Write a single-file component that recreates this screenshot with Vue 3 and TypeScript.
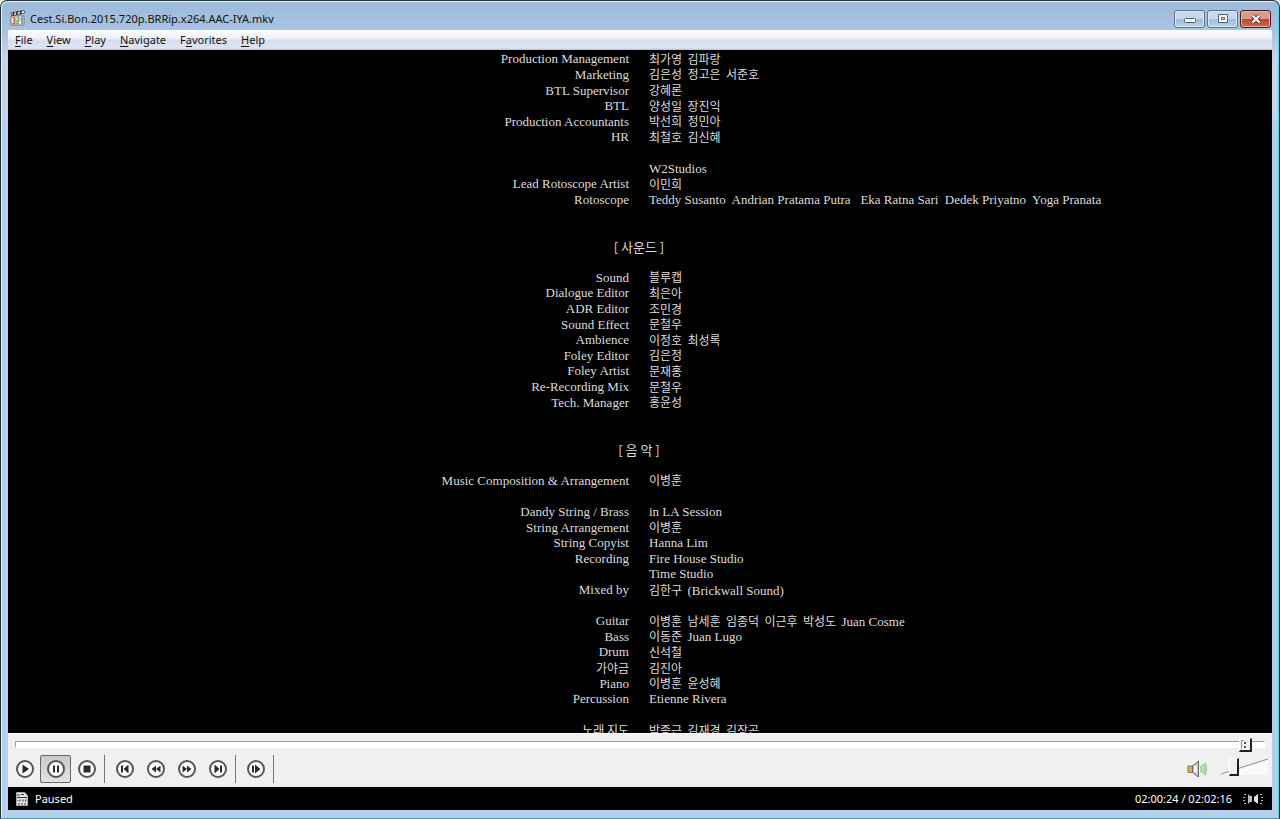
<script setup lang="ts">
interface Credit { row: number; role?: string; names: string }
interface Part { text: string; hangul: boolean }

const menus = [
  { pre: '', key: 'F', post: 'ile' },
  { pre: '', key: 'V', post: 'iew' },
  { pre: '', key: 'P', post: 'lay' },
  { pre: '', key: 'N', post: 'avigate' },
  { pre: 'F', key: 'a', post: 'vorites' },
  { pre: '', key: 'H', post: 'elp' },
]

const credits: Credit[] = [
  { row: 1, role: 'Production Management', names: '최가영  김파랑' },
  { row: 2, role: 'Marketing', names: '김은성  정고은  서준호' },
  { row: 3, role: 'BTL Supervisor', names: '강혜론' },
  { row: 4, role: 'BTL', names: '양성일  장진익' },
  { row: 5, role: 'Production Accountants', names: '박선희  정민아' },
  { row: 6, role: 'HR', names: '최철호  김신혜' },
  { row: 8, names: 'W2Studios' },
  { row: 9, role: 'Lead Rotoscope Artist', names: '이민희' },
  { row: 10, role: 'Rotoscope', names: 'Teddy Susanto  Andrian Pratama Putra   Eka Ratna Sari  Dedek Priyatno  Yoga Pranata' },
  { row: 15, role: 'Sound', names: '블루캡' },
  { row: 16, role: 'Dialogue Editor', names: '최은아' },
  { row: 17, role: 'ADR Editor', names: '조민경' },
  { row: 18, role: 'Sound Effect', names: '문철우' },
  { row: 19, role: 'Ambience', names: '이정호  최성록' },
  { row: 20, role: 'Foley Editor', names: '김은정' },
  { row: 21, role: 'Foley Artist', names: '문재홍' },
  { row: 22, role: 'Re-Recording Mix', names: '문철우' },
  { row: 23, role: 'Tech. Manager', names: '홍윤성' },
  { row: 28, role: 'Music Composition & Arrangement', names: '이병훈' },
  { row: 30, role: 'Dandy String / Brass', names: 'in LA Session' },
  { row: 31, role: 'String Arrangement', names: '이병훈' },
  { row: 32, role: 'String Copyist', names: 'Hanna Lim' },
  { row: 33, role: 'Recording', names: 'Fire House Studio' },
  { row: 34, names: 'Time Studio' },
  { row: 35, role: 'Mixed by', names: '김한구  (Brickwall Sound)' },
  { row: 37, role: 'Guitar', names: '이병훈  남세훈  임종덕  이근후  박성도  Juan Cosme' },
  { row: 38, role: 'Bass', names: '이동준  Juan Lugo' },
  { row: 39, role: 'Drum', names: '신석철' },
  { row: 40, role: '가야금', names: '김진아' },
  { row: 41, role: 'Piano', names: '이병훈  윤성혜' },
  { row: 42, role: 'Percussion', names: 'Etienne Rivera' },
  { row: 44, role: '노래 지도', names: '박종근  김재경  김장곤' },
]

const headings = [
  { row: 13, text: '[ 사운드 ]' },
  { row: 26, text: '[ 음 악 ]' },
]

const controls = [
  [
    { label: 'Play', d: 'M6.500 4.500l6.500 4.500-6.500 4.500z' },
    { label: 'Pause', d: 'M6 5.500h2v7H6zM10 5.500h2v7h-2z', active: true },
    { label: 'Stop', d: 'M5.500 5.500h7v7h-7z' },
  ],
  [
    { label: 'Previous', d: 'M5 5.500h2v7H5zM12.500 4.500v9L7.500 9z' },
    { label: 'Rewind', d: 'M9 5.500v7L4.500 9zM13.500 5.500v7L9 9z' },
    { label: 'Forward', d: 'M4.500 5.500v7L9 9zM9 5.500v7l4.500-3.500z' },
    { label: 'Next', d: 'M5.500 4.500v9l5-4.500zM11 5.500h2v7h-2z' },
  ],
  [{ label: 'Frame step', d: 'M5 5.500h2v7H5zM8 4.500v9l5.500-4.500z' }],
]

function split(text: string): Part[] {
  return (text.match(/[가-힣][가-힣 ]*|[^가-힣]+/g) ?? []).map((t) => ({ text: t, hangul: /[가-힣]/.test(t) }))
}
</script>

<template>
  <div class="window">
    <header class="titlebar">
      <svg class="app-icon" width="16" height="16" viewBox="0 0 16 16">
        <path d="M1 6h13v9H1z" fill="#f4f2ee" stroke="#777" />
        <path d="M1 3l13-2.500.8 2.500L1.500 5.800z" fill="#fff" stroke="#333" stroke-width=".8" />
        <path d="M3 5.300l1-3M6.500 4.600l1-3M10.200 3.900l1-3" stroke="#222" stroke-width="1.600" />
        <path d="M2.500 8h2.300v5.500H2.300M3 10.700h1.500" stroke="#d8622c" stroke-width="1.400" />
        <path d="M6.500 8h2.300v2.700H7v2.800h2.300" stroke="#8aa24a" stroke-width="1.400" />
        <path d="M10.800 9l1.200-1v6" stroke="#4a7fb4" stroke-width="1.400" />
      </svg>
      <h1>Cest.Si.Bon.2015.720p.BRRip.x264.AAC-IYA.mkv</h1>
      <div class="caption">
        <button type="button" aria-label="Minimize">
          <svg width="12" height="10" viewBox="0 0 12 10"><rect x=".5" y="4.500" width="11" height="4" rx="1" fill="#fff" stroke="#55606e" /></svg>
        </button>
        <button type="button" aria-label="Maximize">
          <svg width="12" height="10" viewBox="0 0 12 10"><path d="M1.500.5h9v8h-9zM4.500 3.500h3v2h-3z" fill="#fff" fill-rule="evenodd" stroke="#55606e" /></svg>
        </button>
        <button type="button" class="close" aria-label="Close">
          <svg width="12" height="10" viewBox="0 0 12 10">
            <path d="M2.500 1.500l7 7M9.500 1.500l-7 7" stroke="#5c3a40" stroke-width="4" />
            <path d="M2.500 1.500l7 7M9.500 1.500l-7 7" stroke="#fff" stroke-width="2" />
          </svg>
        </button>
      </div>
    </header>

    <div class="client">
      <nav class="menubar">
        <button v-for="m in menus" :key="m.post" type="button">{{ m.pre }}<u>{{ m.key }}</u>{{ m.post }}</button>
      </nav>

      <main class="video">
        <div class="credits">
          <template v-for="c in credits" :key="c.row">
            <span v-if="c.role" class="role" :style="{ gridRow: c.row }"><span v-for="(p, i) in split(c.role)" :key="i" :class="{ ko: p.hangul }">{{ p.text }}</span></span>
            <span class="names" :style="{ gridRow: c.row }"><span v-for="(p, i) in split(c.names)" :key="i" :class="{ ko: p.hangul }">{{ p.text }}</span></span>
          </template>
          <h2 v-for="h in headings" :key="h.row" :style="{ gridRow: h.row }">{{ h.text }}</h2>
        </div>
      </main>

      <div class="seek">
        <input type="range" min="0" max="7336" value="7262" aria-label="Seek" />
      </div>

      <div class="toolbar">
        <div v-for="(group, g) in controls" :key="g" class="group">
          <button v-for="b in group" :key="b.label" type="button" :class="{ active: b.active }" :aria-label="b.label">
            <svg width="18" height="18" viewBox="0 0 18 18">
              <circle cx="9" cy="9" r="8" fill="#fff" stroke="#555" stroke-width="2" />
              <path :d="b.d" fill="#2b2b2b" />
            </svg>
          </button>
        </div>
        <div class="sound">
          <button type="button" aria-label="Mute">
            <svg width="20" height="18" viewBox="0 0 20 18">
              <path d="M1 6h5v6.500H1z" fill="#dcae4a" stroke="#8b7b50" />
              <path d="M5.500 6l6-5v16l-6-4.500z" fill="#c4c4c4" stroke="#666" />
              <path d="M8.500 5.500v7" stroke="#fff" stroke-width="2.500" />
              <path d="M13.500 6q2 3 0 6M15.500 4.500q3 4.500 0 9M17.500 3q3.500 6 0 12" stroke="#86d070" stroke-width="1.500" />
            </svg>
          </button>
          <div class="volume">
            <svg width="48" height="18" viewBox="0 0 48 18">
              <path d="M1 16L48 1v16H1z" fill="#fafafa" />
              <path d="M1 16L48 1" stroke="#8c8c8c" />
            </svg>
            <input type="range" min="0" max="100" value="23" aria-label="Volume" />
          </div>
        </div>
      </div>

      <footer class="status">
        <svg width="12" height="14" viewBox="0 0 12 14">
          <path d="M.5.5h8l3 3v10H.5z" fill="#e4e4e4" stroke="#aaa" />
          <path d="M1 3h3M5 2.500h3M1 5.500h10M2 8v1M4 7.500v2M7 7.500v2M9.500 7.500v2M3 11v2M6 11v2M9 11v2" stroke="#333" />
        </svg>
        <span>Paused</span>
        <time>02:00:24 / 02:02:16</time>
        <svg width="20" height="12" viewBox="0 0 20 12">
          <path d="M5 1l2 2h2v6H7l-2 2z" fill="#bbb" />
          <path d="M15 1l-4 3v4l4 3z" fill="#e4e4e4" />
          <path d="M1 1.500h2M0 4.500h2M0 7.500h2M1 10.500h2M17 1.500h2M18 4.500h2M18 7.500h2M17 10.500h2" stroke="#b7bd96" />
        </svg>
      </footer>
    </div>
  </div>
</template>

<style>
body { margin: 0; }
</style>

<style scoped>
.window {
  box-sizing: border-box;
  height: 100vh;
  display: flex;
  flex-direction: column;
  padding: 0 7px 8px;
  border: 1px solid #20303c;
  border-bottom-color: #2ea7b3;
  border-radius: 7px 7px 0 0;
  background: linear-gradient(#9db9d8, #a9c4e1 30px, #c3d6ee 60px, #c3d6ee 118px, #b3cfee 119px);
  box-shadow: inset 1px 1px 0 #e6f0fa, inset -1px 0 0 #5fd0dc;
  font: 11px/16px "Noto Sans", "Open Sans", sans-serif;
  color: #111;
}
button { font: inherit; color: inherit; padding: 0; border: 0; background: none; }
svg { display: block; fill: none; }
.titlebar { flex: none; display: flex; align-items: center; height: 29px; padding: 4px 1px 0 2px; box-sizing: border-box; }
h1 { flex: 1; margin: 2px 0 0 4px; font-size: 11px; font-weight: 400; white-space: nowrap; }
.caption { display: flex; gap: 2px; padding-top: 2px; }
.caption button {
  display: flex; align-items: center; justify-content: center;
  box-sizing: border-box; width: 31px; height: 18px;
  border: 1px solid #5d7490; border-radius: 3px;
  background: linear-gradient(#c6d8ec 50%, #a0bbd6 50%, #b9d3e8);
  box-shadow: inset 0 0 0 1px #dbe8f5;
}
.caption .close { border-color: #4a1c22; background: linear-gradient(#dc9a8d 50%, #c0422b 50%, #d1694c); box-shadow: inset 0 0 0 1px #e7b1a6; }
.client { flex: 1; min-height: 0; display: flex; flex-direction: column; background: #f0f0f0; }
.menubar { flex: none; display: flex; gap: 14px; height: 20px; padding-left: 7px; background: linear-gradient(#fff, #eceff8 45%, #d8ddee 50%, #dfe4f2 90%, #b8bcc8); }
.menubar u { text-underline-offset: 2px; }
.video { flex: 1; min-height: 0; overflow: hidden; background: #000; }
.credits {
  display: grid; grid-template-columns: 1fr 1fr; grid-template-rows: repeat(44, 2.29%);
  column-gap: 20px; height: 100%; box-sizing: border-box; padding: 1px 2px 0 0;
  align-items: center; color: #dcdcdc;
  font: 13px/15px "Liberation Serif", "Noto Sans CJK KR", serif; white-space: pre;
}
.role { grid-column: 1; text-align: right; }
.names { grid-column: 2; }
.ko { font: 12px/15px "Noto Sans CJK KR", sans-serif; }
h2 { grid-column: 1 / 3; align-self: start; margin: 0; text-align: center; font: 13px/18px "Noto Sans CJK KR", sans-serif; }
input[type="range"] { appearance: none; display: block; margin: 0; background: none; }
.seek { flex: none; padding: 3px 7px; border-top: 1px solid #fff; }
.seek input { width: 100%; height: 14px; }
.seek input::-webkit-slider-runnable-track { height: 7px; border: 1px solid; border-color: #a0a0a0 #fff #fff #a0a0a0; box-sizing: border-box; background: #fff; }
.seek input::-webkit-slider-thumb {
  appearance: none; width: 13px; height: 14px; margin-top: -4px; box-sizing: border-box;
  border: 1px solid; border-width: 1px 2px 2px 1px; border-color: #fff #222 #222 #fff;
  background:
    linear-gradient(#555, #555) 4px 3px / 2px 2px no-repeat,
    linear-gradient(#555, #555) 4px 7px / 2px 2px no-repeat,
    linear-gradient(#999, #999) 1px 1px / 1px 9px no-repeat,
    linear-gradient(#999, #999) 1px 1px / 3px 1px no-repeat,
    #f4f4f4;
}
.toolbar { flex: none; display: flex; align-items: center; height: 33px; box-sizing: border-box; padding-bottom: 4px; }
.group { display: flex; height: 28px; padding: 0 2px 0 4px; border-right: 1px solid #777; }
.group:first-child { padding-left: 1px; }
.group button { display: flex; align-items: center; justify-content: center; width: 31px; height: 28px; box-sizing: border-box; }
.group .active { border: 1px solid #666; border-radius: 2px; background: linear-gradient(#c9c9c9, #e3e3e3); }
.sound { margin-left: auto; display: flex; align-items: center; gap: 13px; padding-right: 4px; }
.volume { display: grid; padding-bottom: 4px; }
.volume > * { grid-area: 1 / 1; }
.volume input { width: 48px; height: 18px; }
.volume input::-webkit-slider-thumb { appearance: none; width: 10px; height: 18px; box-sizing: border-box; background: #f0f0f0; border: 1px solid; border-color: #fff #222 #222 #fff; border-width: 1px 2px 2px 1px; }
.status { flex: none; display: flex; align-items: center; height: 23px; box-sizing: border-box; padding: 1px 9px 0 8px; background: #000; color: #fff; gap: 7px; }
.status time { margin-left: auto; margin-right: 4px; }
</style>
